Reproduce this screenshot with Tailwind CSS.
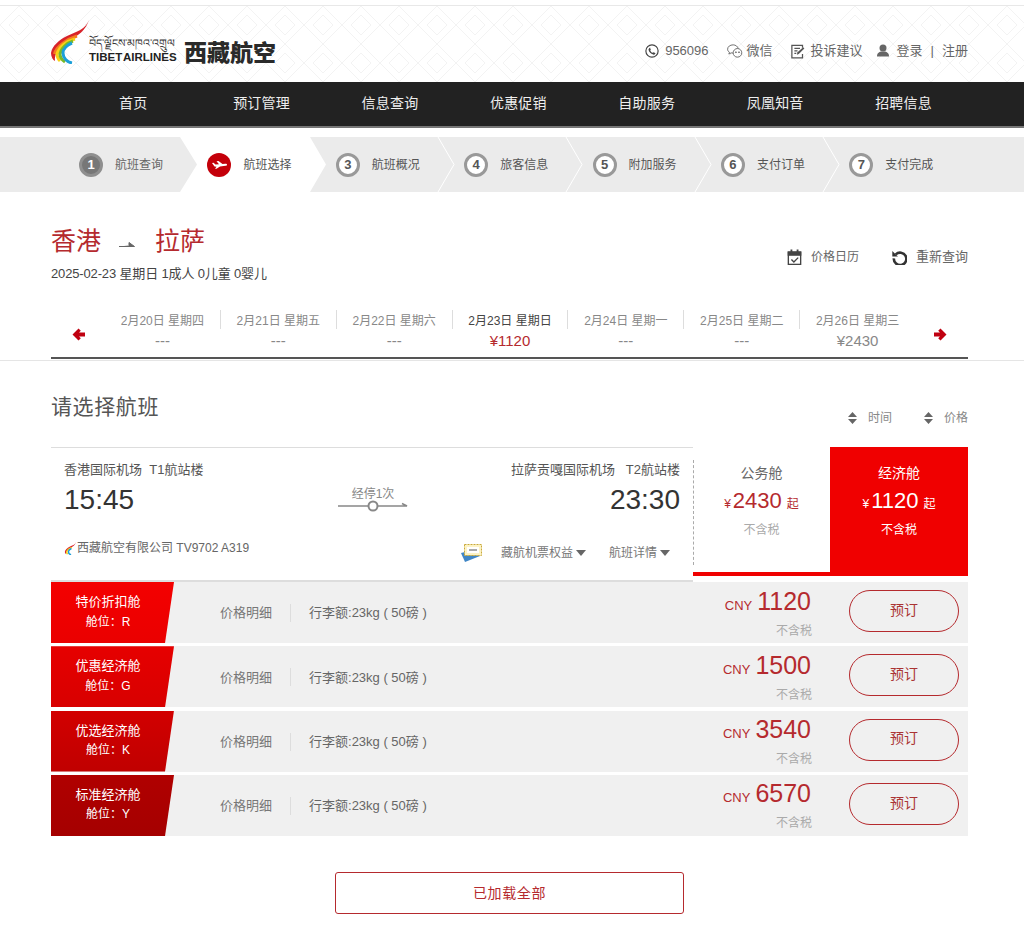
<!doctype html>
<html lang="zh"><head><meta charset="utf-8"><script src="https://cdn.jsdelivr.net/npm/@tailwindcss/browser@4"></script><title>西藏航空</title></head>
<body class="bg-white font-['Liberation_Sans','Noto_Sans_CJK_SC',sans-serif] text-[#555] text-xs overflow-hidden h-[943px]">
<header class="relative h-[77px] mt-[5px] border-t border-[#e8e8e8] bg-white overflow-hidden">
 <svg class="absolute inset-0 w-full h-full" aria-hidden="true"><defs><pattern id="dia" width="38" height="38" patternUnits="userSpaceOnUse"><path d="M0 19L19 0L38 19L19 38Z M9 19L19 9L29 19L19 29Z" fill="none" stroke="#f3f3f3"/></pattern></defs><rect width="100%" height="100%" fill="url(#dia)"/></svg>
 <div class="relative flex items-start justify-between h-[76px] pl-[51px] pr-[56px]">
  <div class="flex items-end h-[44px] mt-[14px]">
   <svg width="38" height="44" viewBox="0 0 38 44" fill="none" stroke-width="3"><path d="M38 0C35 9 25 12 16 16C8 20 1 26 0 33C0 37 2 40 4 41C3 34 8 27 17 21C27 16 35 10 38 0Z" fill="#d8232a" stroke="none"/><path d="M26 16C16 19 5 27 3.500 34" stroke="#f47b20"/><path d="M24 19C15 21 8 27 6 34C6 37 7 39 9 41" stroke="#f7d117"/><path d="M22 21C16 23 10 28 9 34C9 37 11 40 14 42" stroke="#79b928"/><path d="M21 23C16 25 12 29 12 33C12 38 16 42 21 43" stroke="#1b9fd8"/></svg>
   <div class="flex flex-col items-start w-[90px]"><span class="text-[11px] leading-[11px] text-[#333] font-['DejaVu_Sans',sans-serif] whitespace-nowrap">བོད་ལྗོངས་མཁའ་འགྲུལ</span><span class="mt-[2px] text-[11.500px] leading-[13px] font-bold text-[#222] whitespace-nowrap [word-spacing:-2px]">TIBET AIRLINES</span></div>
   <span class="text-[23px] leading-[28px] font-black text-[#2a2a2a] ml-[5px] -mb-[3px]">西藏航空</span>
  </div>
  <div class="flex items-center text-[13px] leading-[16px] text-[#666] mt-[37px]">
   <svg width="14" height="14" viewBox="0 0 24 24" fill="none" stroke="#444" stroke-width="2"><circle cx="12" cy="12" r="10.500"/><path d="M8 6l2 3-1 2c1 2 2 3 4 4l2-1 3 2c-1 2-2 3-4 2-4-1-7-4-8-8 0-2 2-4 4-4z" fill="#444" stroke="none"/></svg>
   <span class="ml-[6px]">956096</span>
   <svg class="ml-[18px]" width="16" height="14" viewBox="0 0 26 22" fill="none" stroke="#666" stroke-width="1.500"><path d="M10 1C5 1 1 4 1 8c0 2 1 4 3 5l-1 3 4-2c1 0 2 .5 3 .5"/><path d="M10 1c4 0 8 3 8 6"/><circle cx="17" cy="14" r="7"/><circle cx="14.500" cy="13" r=".8" fill="#666"/><circle cx="19.500" cy="13" r=".8" fill="#666"/></svg>
   <span class="ml-[4px]">微信</span>
   <svg class="ml-[17px]" width="15" height="15" viewBox="0 0 24 24" fill="none" stroke="#555" stroke-width="2"><path d="M20 6V2H3v20h17v-6"/><path d="M7 7h9M7 11h5M7 15h3"/><path d="M11 17l1-4 9-8 2 2-9 9z" fill="#555" stroke="none"/></svg>
   <span class="ml-[6px]">投诉建议</span>
   <svg class="ml-[14px] -mt-[2px]" width="12" height="13" viewBox="0 0 24 26" fill="#666"><circle cx="12" cy="8" r="7"/><path d="M0 25c0-7 4-9 8-10h8c4 1 8 3 8 10z"/></svg>
   <span class="ml-[8px]">登录</span><span class="ml-[8px] mr-[8px]">|</span><span>注册</span>
  </div>
 </div>
</header>
<nav class="flex h-[46px] bg-[#222] border-b-2 border-[#777] pl-[69px] text-[#eee] text-[14px] tracking-[0.2px]">
 <a class="w-[128.400px] text-center leading-[43px]">首页</a><a class="w-[128.400px] text-center leading-[43px]">预订管理</a><a class="w-[128.400px] text-center leading-[43px]">信息查询</a><a class="w-[128.400px] text-center leading-[43px]">优惠促销</a><a class="w-[128.400px] text-center leading-[43px]">自助服务</a><a class="w-[128.400px] text-center leading-[43px]">凤凰知音</a><a class="w-[128.400px] text-center leading-[43px]">招聘信息</a>
</nav>
<section class="relative flex items-center h-[55px] mt-[9px] bg-[#ebebeb] pl-[79px] text-[#555]">
 <svg class="absolute inset-0" width="1024" height="55" aria-hidden="true"><path d="M180 0H310L326 27.500L310 55H180L197 27.500Z" fill="#fff"/><path d="M438 0L454 27.500L438 55M566 0L582 27.500L566 55M695 0L711 27.500L695 55M823 0L839 27.500L823 55" fill="none" stroke="#fff"/></svg>
 <div class="relative flex items-center w-[128.400px]"><span class="flex items-center justify-center w-[24px] h-[24px] rounded-full bg-[#777] border-[3px] border-[#8f8f8f] text-white text-[13px] font-bold">1</span><span class="ml-[12px] text-[#666]">航班查询</span></div>
 <div class="relative flex items-center w-[128.400px]"><span class="flex items-center justify-center w-[24px] h-[24px] rounded-full bg-[#c4000a]"><svg width="15" height="8" viewBox="0 0 30 16" fill="#fff"><path d="M0 4L3 3.500L7 7L14 6.500L9 0.500L13 0L21 6L27 5.500C31 5.500 31 9 27 9.500L16 11L9 15.500L6 15.500L9 11.500L5 11Z"/></svg></span><span class="ml-[12px] text-[#555]">航班选择</span></div>
 <div class="relative flex items-center w-[128.400px]"><span class="flex items-center justify-center w-[24px] h-[24px] rounded-full bg-white border-[3px] border-[#999] text-[#555] text-[13px] font-bold">3</span><span class="ml-[12px]">航班概况</span></div>
 <div class="relative flex items-center w-[128.400px]"><span class="flex items-center justify-center w-[24px] h-[24px] rounded-full bg-white border-[3px] border-[#999] text-[#555] text-[13px] font-bold">4</span><span class="ml-[12px]">旅客信息</span></div>
 <div class="relative flex items-center w-[128.400px]"><span class="flex items-center justify-center w-[24px] h-[24px] rounded-full bg-white border-[3px] border-[#999] text-[#555] text-[13px] font-bold">5</span><span class="ml-[12px]">附加服务</span></div>
 <div class="relative flex items-center w-[128.400px]"><span class="flex items-center justify-center w-[24px] h-[24px] rounded-full bg-white border-[3px] border-[#999] text-[#555] text-[13px] font-bold">6</span><span class="ml-[12px]">支付订单</span></div>
 <div class="relative flex items-center w-[128.400px]"><span class="flex items-center justify-center w-[24px] h-[24px] rounded-full bg-white border-[3px] border-[#999] text-[#555] text-[13px] font-bold">7</span><span class="ml-[12px]">支付完成</span></div>
</section>
<section class="border-b border-[#e5e5e5] h-[169px]">
 <div class="ml-[51px] w-[917px] flex flex-col h-[168px]">
  <div class="flex justify-between h-[107px]">
   <div class="pt-[32px]">
    <div class="flex items-center text-[25px] leading-[34px] text-[#b52a2e]"><span>香港</span><svg class="mx-[18px] mt-[8px]" width="16" height="8" viewBox="0 0 16 8"><path d="M0 5.500h15.500L10 1.500v3" fill="#666" stroke="#666"/></svg><span class="ml-[2px]">拉萨</span></div>
    <div class="mt-[7px] text-[13px] leading-[18px] text-[#444] tracking-[-0.15px]">2025-02-23 星期日 1成人 0儿童 0婴儿</div>
   </div>
   <div class="flex items-center h-[20px] mt-[55px]">
    <svg width="15" height="16" viewBox="0 0 24 26" fill="none" stroke="#444" stroke-width="2.200"><rect x="2" y="5" width="20" height="20"/><path d="M2 5h20v5H2z" fill="#444"/><path d="M7 1v6M17 1v6" stroke-width="3"/><path d="M7 17l4 4 7-7"/></svg>
    <span class="ml-[9px] text-[#666]">价格日历</span>
    <svg class="ml-[33px]" width="15" height="15" viewBox="0 0 24 24" fill="none" stroke="#333" stroke-width="4.200"><path d="M6 7A10 10 0 1 1 3 13.500"/><path d="M0.500 1.500v9h9z" fill="#333" stroke="none"/></svg>
    <span class="ml-[9px] text-[13px] text-[#666]">重新查询</span>
   </div>
  </div>
  <div class="flex items-start h-[60px] border-b-2 border-[#555] pt-[11px] pl-[54px] pr-[53px] relative">
   <svg class="absolute left-[21px] top-[29px]" width="13" height="13" viewBox="0 0 13 13" fill="#c00010"><path d="M6.500 0.500L8.800 2.700L7 4.500H13V8.500H7L8.800 10.300L6.500 12.500L0.500 6.500Z"/></svg>
   <svg class="absolute right-[21px] top-[29px]" width="13" height="13" viewBox="0 0 13 13" fill="#c00010"><path d="M6.500 0.500L4.200 2.700L6 4.500H0V8.500H6L4.200 10.300L6.500 12.500L12.500 6.500Z"/></svg>
   <div class="flex-1 text-center text-[#888] pt-[2px] h-[19px]"><div class="leading-[18px]">2月20日 星期四</div><div class="text-[15px] leading-[22px]">---</div></div>
   <div class="flex-1 text-center text-[#888] pt-[2px] border-l border-[#ddd] h-[19px]"><div class="leading-[18px]">2月21日 星期五</div><div class="text-[15px] leading-[22px]">---</div></div>
   <div class="flex-1 text-center text-[#888] pt-[2px] border-l border-[#ddd] h-[19px]"><div class="leading-[18px]">2月22日 星期六</div><div class="text-[15px] leading-[22px]">---</div></div>
   <div class="flex-1 text-center text-[#444] pt-[2px] border-l border-[#ddd] h-[19px]"><div class="leading-[18px]">2月23日 星期日</div><div class="text-[15px] leading-[22px] text-[#b52a2e]">¥1120</div></div>
   <div class="flex-1 text-center text-[#888] pt-[2px] border-l border-[#ddd] h-[19px]"><div class="leading-[18px]">2月24日 星期一</div><div class="text-[15px] leading-[22px]">---</div></div>
   <div class="flex-1 text-center text-[#888] pt-[2px] border-l border-[#ddd] h-[19px]"><div class="leading-[18px]">2月25日 星期二</div><div class="text-[15px] leading-[22px]">---</div></div>
   <div class="flex-1 text-center text-[#888] pt-[2px] border-l border-[#ddd] h-[19px]"><div class="leading-[18px]">2月26日 星期三</div><div class="text-[15px] leading-[22px]">¥2430</div></div>
  </div>
 </div>
</section>
<main class="ml-[51px] w-[917px]">
 <div class="flex justify-between items-end h-[86px]">
  <h2 class="text-[21px] leading-[30px] tracking-[0.6px] text-[#555] mb-[25px]">请选择航班</h2>
  <div class="flex items-center mb-[21px] text-[#888]">
   <svg width="9" height="12" viewBox="0 0 9 12" fill="#666"><path d="M4.500 0L9 5H0zM4.500 12L0 7H9z"/></svg><span class="ml-[11px]">时间</span>
   <svg class="ml-[32px]" width="9" height="12" viewBox="0 0 9 12" fill="#666"><path d="M4.500 0L9 5H0zM4.500 12L0 7H9z"/></svg><span class="ml-[11px]">价格</span>
  </div>
 </div>
 <div class="flex h-[135px]">
  <div class="w-[642px] h-[135px] border-t border-b-2 border-[#ddd] pt-[14px] px-[13px] flex flex-col">
   <div class="flex justify-between text-[13px] text-[#555] leading-[16px]"><span>香港国际机场&nbsp;&nbsp;T1航站楼</span><span>拉萨贡嘎国际机场&nbsp;&nbsp;&nbsp;T2航站楼</span></div>
   <div class="flex justify-between items-center h-[34px] mt-[5px]">
    <span class="text-[28px] text-[#333]">15:45</span>
    <div class="relative w-[70px] h-[34px] text-center text-[#888] leading-[16px] ml-[2px]"><div class="pt-[3px]">经停1次</div><svg class="absolute left-0 top-[17px]" width="70" height="12" viewBox="0 0 70 12" fill="none" stroke="#888" stroke-width="1.500"><path d="M0 6H69L64 3.500"/><circle cx="35" cy="6" r="4.500" fill="#fff" stroke-width="2"/></svg></div>
    <span class="text-[28px] text-[#333]">23:30</span>
   </div>
   <div class="flex justify-between items-center mt-[26px] pr-[10px]">
    <div class="flex items-center text-[#666] -mt-[10px]"><svg width="13" height="13" viewBox="0 0 38 44" fill="none" stroke-width="5"><path d="M38 0C35 9 25 12 16 16C8 20 1 26 0 33C0 37 2 40 4 41C3 34 8 27 17 21C27 16 35 10 38 0Z" fill="#d8232a" stroke="none"/><path d="M24 19C15 21 8 27 6 34C6 37 7 39 9 41" stroke="#f7d117"/><path d="M22 22C16 25 12 29 12 33C12 38 16 42 21 43" stroke="#1b9fd8"/></svg>西藏航空有限公司 TV9702 A319</div>
    <div class="flex items-center text-[#777]">
     <svg width="21" height="20" viewBox="0 0 21 20"><path d="M0 10L16 6L19 13L4 19Z" fill="#3f86c6"/><rect x="3.500" y="1.500" width="17" height="11" fill="#fdf3c4" stroke="#c9a93a" stroke-dasharray="2 1"/><rect x="6" y="4" width="12" height="6" fill="#fff"/><path d="M8 7h8" stroke="#555"/></svg>
     <span class="ml-[19px]">藏航机票权益</span><svg class="ml-[3px]" width="10" height="6" viewBox="0 0 10 6" fill="#666"><path d="M0 0H10L5 6Z"/></svg>
     <span class="ml-[23px]">航班详情</span><svg class="ml-[3px]" width="10" height="6" viewBox="0 0 10 6" fill="#666"><path d="M0 0H10L5 6Z"/></svg>
    </div>
   </div>
  </div>
  <div class="relative w-[137px] h-[129px] border-b-4 border-[#f00000] text-center pt-[16px]">
   <div class="absolute left-0 top-[13px] h-[105px] border-l border-dashed border-[#aaa]"></div>
   <div class="text-[14px] leading-[20px] text-[#666]">公务舱</div>
   <div class="flex items-baseline justify-center text-[#b52a2e] leading-[32px] mt-[2px]"><span class="text-[12px] mr-[2px]">¥</span><span class="text-[22px]">2430</span><span class="text-[12px] ml-[5px]">起</span></div>
   <div class="text-[#aaa] leading-[20px]">不含税</div>
  </div>
  <div class="w-[138px] h-[129px] bg-[#f00000] text-center pt-[16px] text-white">
   <div class="text-[14px] leading-[20px]">经济舱</div>
   <div class="flex items-baseline justify-center leading-[32px] mt-[2px]"><span class="text-[12px] mr-[2px]">¥</span><span class="text-[22px]">1120</span><span class="text-[12px] ml-[5px]">起</span></div>
   <div class="leading-[20px]">不含税</div>
  </div>
 </div>
 <div class="flex flex-col gap-[3.300px]">
  <div class="relative flex items-center h-[61px] bg-[#f0f0f0] text-[13px]">
   <div class="absolute left-0 top-0 w-[123px] h-[61px] bg-gradient-to-b from-[#f40000] to-[#ea0000] [clip-path:polygon(0_0,100%_0,92.700%_100%,0_100%)] text-white text-center"><div class="w-[114px] pt-[10px] leading-[19.500px]">特价折扣舱<br><span class="text-[12px]">舱位：R</span></div></div>
   <span class="ml-[169px] pt-[1px] text-[#777]">价格明细</span><span class="ml-[18px] h-[18px] mt-[1px] border-l border-[#ddd]"></span><span class="ml-[18px] pt-[1px] text-[#666]">行李额:23kg&nbsp;(&nbsp;50磅&nbsp;)</span>
   <div class="ml-auto mr-[157px] pt-[1px] text-right"><div class="flex items-baseline justify-end text-[#b52a2e] leading-[32px]"><span class="mr-[5px]">CNY</span><span class="text-[25px]">1120</span></div><div class="text-[12px] text-[#aaa] leading-[22px] -mt-[2px] -mr-[1px]">不含税</div></div>
   <button class="absolute left-[798px] top-[8px] w-[110px] h-[42px] pb-[2px] rounded-full border border-[#b52a2e] text-[14px] text-[#a33]">预订</button>
  </div>
  <div class="relative flex items-center h-[61px] bg-[#f0f0f0] text-[13px]">
   <div class="absolute left-0 top-0 w-[123px] h-[61px] bg-gradient-to-b from-[#e60000] to-[#d80000] [clip-path:polygon(0_0,100%_0,92.700%_100%,0_100%)] text-white text-center"><div class="w-[114px] pt-[10px] leading-[19.500px]">优惠经济舱<br><span class="text-[12px]">舱位：G</span></div></div>
   <span class="ml-[169px] pt-[1px] text-[#777]">价格明细</span><span class="ml-[18px] h-[18px] mt-[1px] border-l border-[#ddd]"></span><span class="ml-[18px] pt-[1px] text-[#666]">行李额:23kg&nbsp;(&nbsp;50磅&nbsp;)</span>
   <div class="ml-auto mr-[157px] pt-[1px] text-right"><div class="flex items-baseline justify-end text-[#b52a2e] leading-[32px]"><span class="mr-[5px]">CNY</span><span class="text-[25px]">1500</span></div><div class="text-[12px] text-[#aaa] leading-[22px] -mt-[2px] -mr-[1px]">不含税</div></div>
   <button class="absolute left-[798px] top-[8px] w-[110px] h-[42px] pb-[2px] rounded-full border border-[#b52a2e] text-[14px] text-[#a33]">预订</button>
  </div>
  <div class="relative flex items-center h-[61px] bg-[#f0f0f0] text-[13px]">
   <div class="absolute left-0 top-0 w-[123px] h-[61px] bg-gradient-to-b from-[#d20000] to-[#c00000] [clip-path:polygon(0_0,100%_0,92.700%_100%,0_100%)] text-white text-center"><div class="w-[114px] pt-[10px] leading-[19.500px]">优选经济舱<br><span class="text-[12px]">舱位：K</span></div></div>
   <span class="ml-[169px] pt-[1px] text-[#777]">价格明细</span><span class="ml-[18px] h-[18px] mt-[1px] border-l border-[#ddd]"></span><span class="ml-[18px] pt-[1px] text-[#666]">行李额:23kg&nbsp;(&nbsp;50磅&nbsp;)</span>
   <div class="ml-auto mr-[157px] pt-[1px] text-right"><div class="flex items-baseline justify-end text-[#b52a2e] leading-[32px]"><span class="mr-[5px]">CNY</span><span class="text-[25px]">3540</span></div><div class="text-[12px] text-[#aaa] leading-[22px] -mt-[2px] -mr-[1px]">不含税</div></div>
   <button class="absolute left-[798px] top-[8px] w-[110px] h-[42px] pb-[2px] rounded-full border border-[#b52a2e] text-[14px] text-[#a33]">预订</button>
  </div>
  <div class="relative flex items-center h-[61px] bg-[#f0f0f0] text-[13px]">
   <div class="absolute left-0 top-0 w-[123px] h-[61px] bg-gradient-to-b from-[#b00000] to-[#a50000] [clip-path:polygon(0_0,100%_0,92.700%_100%,0_100%)] text-white text-center"><div class="w-[114px] pt-[10px] leading-[19.500px]">标准经济舱<br><span class="text-[12px]">舱位：Y</span></div></div>
   <span class="ml-[169px] pt-[1px] text-[#777]">价格明细</span><span class="ml-[18px] h-[18px] mt-[1px] border-l border-[#ddd]"></span><span class="ml-[18px] pt-[1px] text-[#666]">行李额:23kg&nbsp;(&nbsp;50磅&nbsp;)</span>
   <div class="ml-auto mr-[157px] pt-[1px] text-right"><div class="flex items-baseline justify-end text-[#b52a2e] leading-[32px]"><span class="mr-[5px]">CNY</span><span class="text-[25px]">6570</span></div><div class="text-[12px] text-[#aaa] leading-[22px] -mt-[2px] -mr-[1px]">不含税</div></div>
   <button class="absolute left-[798px] top-[8px] w-[110px] h-[42px] pb-[2px] rounded-full border border-[#b52a2e] text-[14px] text-[#a33]">预订</button>
  </div>
 </div>
 <button class="block mt-[36px] ml-[284px] w-[349px] h-[42px] border border-[#b52a2e] rounded-[3px] text-[14px] text-[#b52a2e] tracking-[0.6px]">已加载全部</button>
</main>
</body></html>
